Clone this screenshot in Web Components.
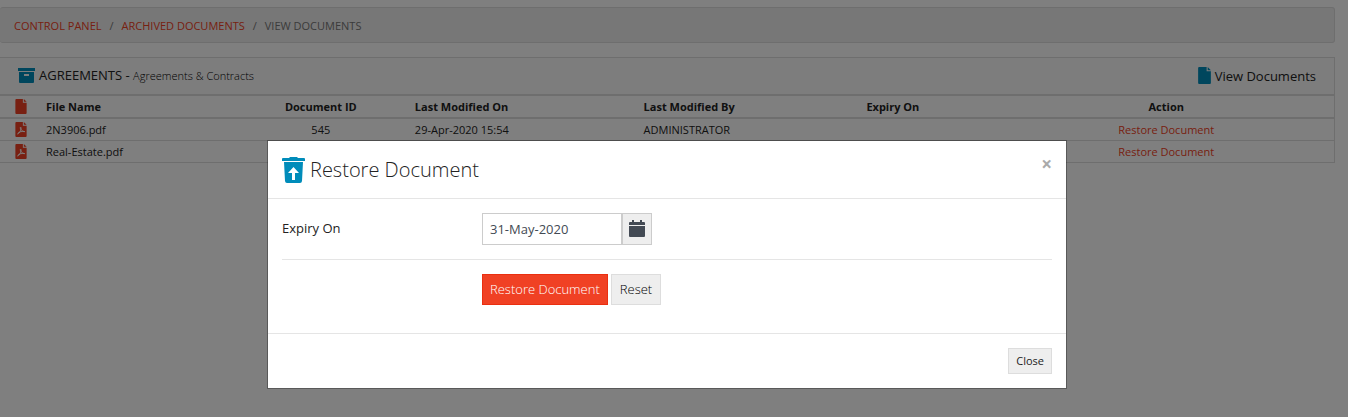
<!DOCTYPE html>
<html lang="en">
<head>
<meta charset="utf-8">
<meta name="viewport" content="width=device-width, initial-scale=1">
<title>View Documents</title>
<style>
    body {
        margin: 0;
        background-color: white;
        color: #222;
        font: 13px/20px "Open Sans", "Noto Sans", sans-serif;
    }
</style>
</head>
<body>
<documents-page></documents-page>
<restore-modal heading="Restore Document">
    <restore-form></restore-form>
</restore-modal>

<script>
const ICONS = {
    archive: ["0 0 17 15", `<path d="M0 0h17v3H0zM1 4h15v10q0 1-1 1H2q-1 0-1-1zM6 6v2h5V6z" fill-rule="evenodd"/>`],
    file: ["0 0 12 16", `<path d="M0 1q0-1 1-1h7v4h4v11q0 1-1 1H1q-1 0-1-1zM9 0l3 3H9z"/>`],
    pdf: ["0 0 12 16", `<path d="M0 1q0-1 1-1h7v4h4v11q0 1-1 1H1q-1 0-1-1zM9 0l3 3H9z"/>
        <path d="M5.5 5.5c-1 1 1 4.5 4.5 4.7M5.8 5.5c1 2-.8 6-3.4 7.5M2.3 12.3c1.5-2 5-2.6 7.7-2" fill="none" stroke="#fff"/>`],
    trash: ["0 0 23 26", `<path d="M1 1h6l1-1h7l1 1h6q1 0 1 1v2H0V2q0-1 1-1zM2 5h19l-1 19q-.2 2-2 2H5q-1.800 0-2-2zM11.500 10L6 16h4v7h3v-7h4z" fill-rule="evenodd"/>`],
    calendar: ["0 0 16 18", `<path d="M3 0h2v2h6V0h2v2h2q1 0 1 1v2H0V3q0-1 1-1h2zM0 6h16v10q0 1-1 1H1q-1 0-1-1z"/>`]
};

class UiIcon extends HTMLElement {

    constructor() {
        super();
        this.shadowDOM = this.attachShadow({ mode: "open" });
    }

    connectedCallback() {
        const [viewBox, shape] = ICONS[this.getAttribute("name")];
        this.shadowDOM.innerHTML = `
        <style>
            :host {
                display: inline-block;
                flex: none;
                width: 12px;
                height: 16px;
            }
            svg {
                display: block;
                width: 100%;
                height: 100%;
                fill: currentColor;
            }
        </style>
        <svg viewBox="${viewBox}" aria-hidden="true">${shape}</svg>`;
    }
}

class BreadCrumb extends HTMLElement {

    constructor() {
        super();
        this.shadowDOM = this.attachShadow({ mode: "open" });
        this.shadowDOM.innerHTML = `
        <style>
            :host {
                display: block;
                border: 1px solid #dcdcdc;
                border-left: 0;
                border-radius: 3px;
                background-color: #eee;
                font-size: 11px;
                line-height: 16px;
                text-transform: uppercase;
            }
            ol {
                display: flex;
                margin: 0;
                padding: 10px 14px 8px;
                list-style: none;
            }
            li {
                color: #777;
            }
            li + li::before {
                content: "/";
                padding: 0 8px;
                color: #777;
            }
            a {
                color: #f04124;
                text-decoration: none;
            }
        </style>
        <nav>
            <ol>
                <li><a href="#">Control Panel</a></li>
                <li><a href="#">Archived Documents</a></li>
                <li>View Documents</li>
            </ol>
        </nav>`;
    }
}

class DocumentTable extends HTMLElement {

    constructor() {
        super();
        this.shadowDOM = this.attachShadow({ mode: "open" });
        this._rows = [];
    }

    set rows(rows) {
        this._rows = rows;
        this.render();
    }

    render() {
        this.shadowDOM.innerHTML = `
        <style>
            :host {
                display: block;
                font-size: 11px;
                line-height: 17px;
            }
            table {
                width: 100%;
                table-layout: fixed;
                border-collapse: collapse;
            }
            th, td {
                padding: 2px 8px;
                border-bottom: 1px solid #dcdcdc;
                text-align: left;
                white-space: nowrap;
            }
            th {
                border-top: 2px solid #dcdcdc;
                border-bottom-width: 2px;
                font-weight: 700;
            }
            .icon {
                padding: 0 0 0 15px;
                color: #f04124;
            }
            ui-icon {
                display: block;
                height: 15px;
            }
            .center {
                text-align: center;
            }
            a {
                color: #f04124;
                text-decoration: none;
            }
        </style>
        <table>
            <colgroup>
                <col style="width: 2.85%">
                <col style="width: 14.75%">
                <col style="width: 12.9%">
                <col style="width: 17.15%">
                <col style="width: 16.7%">
                <col style="width: 10.5%">
                <col style="width: 25.15%">
            </colgroup>
            <thead>
                <tr>
                    <th class="icon"><ui-icon name="file"></ui-icon></th>
                    <th>File Name</th>
                    <th class="center">Document ID</th>
                    <th>Last Modified On</th>
                    <th>Last Modified By</th>
                    <th>Expiry On</th>
                    <th class="center">Action</th>
                </tr>
            </thead>
            <tbody>
                ${this._rows.map((row) => `
                <tr>
                    <td class="icon"><ui-icon name="pdf"></ui-icon></td>
                    <td>${row.name}</td>
                    <td class="center">${row.id}</td>
                    <td>${row.modifiedOn}</td>
                    <td>${row.modifiedBy}</td>
                    <td></td>
                    <td class="center"><a href="#">Restore Document</a></td>
                </tr>`).join("")}
            </tbody>
        </table>`;
    }
}

class DocumentsPage extends HTMLElement {

    constructor() {
        super();
        this.shadowDOM = this.attachShadow({ mode: "open" });
    }

    connectedCallback() {
        this.shadowDOM.innerHTML = `
        <style>
            :host {
                display: flex;
                flex-direction: column;
                gap: 14px;
                padding: 7px 13px 0 0;
            }
            section {
                border: 1px solid #dcdcdc;
                border-width: 1px 1px 0 0;
            }
            header {
                display: flex;
                justify-content: space-between;
                align-items: center;
                padding: 7px 18px 8px;
                background-color: #fafafa;
            }
            header div {
                display: flex;
                align-items: center;
                gap: 4px;
            }
            h1 {
                margin: 0;
                font-size: 13px;
                font-weight: 400;
                line-height: 20px;
            }
            small {
                color: black;
                font-size: 11px;
                font-weight: 300;
            }
            ui-icon {
                color: #008cba;
            }
            ui-icon[name="archive"] {
                width: 17px;
                height: 15px;
            }
            ui-icon[name="file"] {
                width: 13px;
                height: 17px;
            }
        </style>
        <bread-crumb></bread-crumb>
        <section>
            <header>
                <div><ui-icon name="archive"></ui-icon><h1>AGREEMENTS - <small>Agreements &amp; Contracts</small></h1></div>
                <div><ui-icon name="file"></ui-icon><span>View Documents</span></div>
            </header>
            <document-table></document-table>
        </section>`;

        this.shadowDOM.querySelector("document-table").rows = [
            { name: "2N3906.pdf", id: "545", modifiedOn: "29-Apr-2020 15:54", modifiedBy: "ADMINISTRATOR" },
            { name: "Real-Estate.pdf", id: "", modifiedOn: "", modifiedBy: "" }
        ];
    }
}

class RestoreForm extends HTMLElement {

    constructor() {
        super();
        this.shadowDOM = this.attachShadow({ mode: "open" });
        this.shadowDOM.innerHTML = `
        <style>
            :host {
                display: block;
            }
            .row {
                display: grid;
                grid-template-columns: 200px 1fr;
                align-items: center;
            }
            label {
                padding-bottom: 2px;
            }
            .group {
                display: flex;
            }
            input {
                box-sizing: border-box;
                width: 140px;
                height: 32px;
                padding: 0 7px;
                border: 1px solid #ccc;
                border-radius: 0;
                color: #434a54;
                font: inherit;
            }
            .picker {
                display: flex;
                align-items: center;
                justify-content: center;
                width: 30px;
                padding: 0;
                border: 1px solid #ccc;
                background-color: #eee;
                color: #434a54;
            }
            ui-icon {
                width: 16px;
                height: 18px;
            }
            hr {
                margin: 14px 0;
                border: 0;
                border-top: 1px solid #e5e5e5;
            }
            .buttons {
                display: flex;
                grid-column: 2;
                gap: 3px;
            }
            .buttons button {
                height: 31px;
                padding: 0 8px 2px;
                border: 1px solid #ddd;
                background-color: #eee;
                color: black;
                font: inherit;
                font-weight: 300;
            }
            .buttons .primary {
                padding: 0 7px 2px;
                border-color: #ea2f10;
                background-color: #f04124;
                color: white;
            }
        </style>
        <form>
            <div class="row">
                <label for="expiry">Expiry On</label>
                <div class="group">
                    <input id="expiry" type="text" value="31-May-2020">
                    <button class="picker" type="button" aria-label="Pick a date"><ui-icon name="calendar"></ui-icon></button>
                </div>
            </div>
            <hr>
            <div class="row">
                <div class="buttons">
                    <button class="primary" type="button">Restore Document</button>
                    <button type="reset">Reset</button>
                </div>
            </div>
        </form>`;
    }
}

class RestoreModal extends HTMLElement {

    constructor() {
        super();
        this.shadowDOM = this.attachShadow({ mode: "open" });
    }

    connectedCallback() {
        this.shadowDOM.innerHTML = `
        <style>
            :host {
                position: fixed;
                inset: 0;
                display: flex;
                justify-content: center;
                align-items: flex-start;
                padding: 140px 14px 0 0;
                background-color: rgba(0, 0, 0, 0.5);
            }
            .dialog {
                box-sizing: border-box;
                width: 100%;
                max-width: 800px;
                border: 1px solid rgba(0, 0, 0, 0.3);
                background-color: white;
                background-clip: padding-box;
            }
            header {
                display: flex;
                align-items: center;
                gap: 5px;
                padding: 14px;
                border-bottom: 1px solid #e5e5e5;
            }
            header ui-icon {
                width: 23px;
                height: 26px;
                color: #008cba;
            }
            h2 {
                flex: 1;
                margin: 0;
                font-size: 20px;
                font-weight: 300;
                line-height: 29px;
            }
            .dismiss {
                align-self: flex-start;
                padding: 0;
                border: 0;
                background: none;
                color: #aaa;
                font: 700 19px/18px "Open Sans", sans-serif;
            }
            .body {
                padding: 14px 14px 28px;
            }
            footer {
                display: flex;
                justify-content: flex-end;
                padding: 14px;
                border-top: 1px solid #e5e5e5;
            }
            .close {
                height: 26px;
                padding: 0 7px;
                border: 1px solid #ddd;
                background-color: #eee;
                color: #222;
                font: inherit;
                font-size: 11px;
            }
        </style>
        <div class="dialog" role="dialog" aria-labelledby="heading">
            <header>
                <ui-icon name="trash"></ui-icon>
                <h2 id="heading">${this.getAttribute("heading")}</h2>
                <button class="dismiss" type="button" aria-label="Dismiss">×</button>
            </header>
            <div class="body"><slot></slot></div>
            <footer><button class="close" type="button">Close</button></footer>
        </div>`;
    }
}

customElements.define("ui-icon", UiIcon);
customElements.define("bread-crumb", BreadCrumb);
customElements.define("document-table", DocumentTable);
customElements.define("documents-page", DocumentsPage);
customElements.define("restore-form", RestoreForm);
customElements.define("restore-modal", RestoreModal);
</script>
</body>
</html>
